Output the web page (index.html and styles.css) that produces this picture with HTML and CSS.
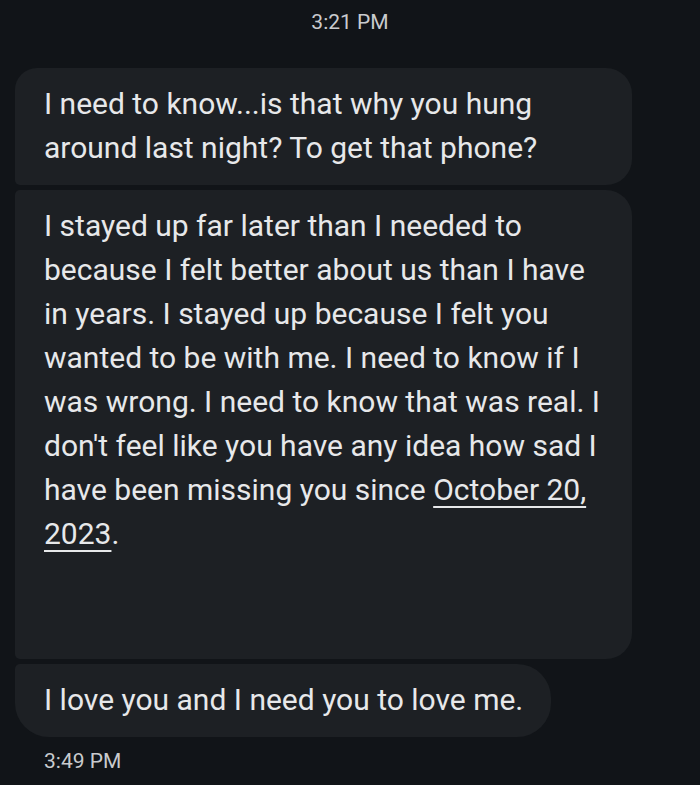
FILE: index.html
```html
<!DOCTYPE html>
<html>
<head>
<meta charset="utf-8">
<link rel="stylesheet" href="styles.css">
</head>
<body>
<div class="thread">
  <div class="time-center">3:21 PM</div>
  <div class="group">
    <div class="bubble first">I need to know...is that why you hung around last night? To get that phone?</div>
    <div class="bubble middle">I stayed up far later than I needed to because I felt better about us than I have in years. I stayed up because I felt you wanted to be with me. I need to know if I was wrong. I need to know that was real. I don't feel like you have any idea how sad I have been missing you since <span class="link">October 20, 2023</span>.<br><br><br></div>
    <div class="bubble last">I love you and I need you to love me.</div>
  </div>
  <div class="time-left">3:49 PM</div>
</div>
</body>
</html>
```
FILE: styles.css
```css
html, body {
  margin: 0;
  padding: 0;
  background: #111418;
}
body {
  width: 700px;
  height: 785px;
  overflow: hidden;
  font-family: Roboto, "Noto Sans", sans-serif;
  color: #e7e8ea;
}
.thread {
  display: flex;
  flex-direction: column;
}
.time-center {
  text-align: center;
  font-size: 21px;
  color: #c9cbce;
  height: 44px;
  line-height: 44px;
  margin-bottom: 24px;
}
.group {
  display: flex;
  flex-direction: column;
  align-items: flex-start;
  gap: 5px;
  padding-left: 15px;
}
.bubble {
  background: #1d2024;
  font-size: 30px;
  line-height: 44px;
  padding: 14px 25px 15px 29px;
  box-sizing: border-box;
}
.first {
  width: 617px;
  border-radius: 22px 26px 26px 5px;
}
.middle {
  width: 617px;
  border-radius: 5px 26px 26px 5px;
}
.last {
  border-radius: 5px 34px 34px 34px;
  padding-right: 28px;
}
.link {
  text-decoration: underline;
  text-underline-offset: 6px;
  text-decoration-thickness: 2px;
}
.time-left {
  font-size: 21px;
  color: #c9cbce;
  padding-left: 44px;
  margin-top: 12px;
}
```
